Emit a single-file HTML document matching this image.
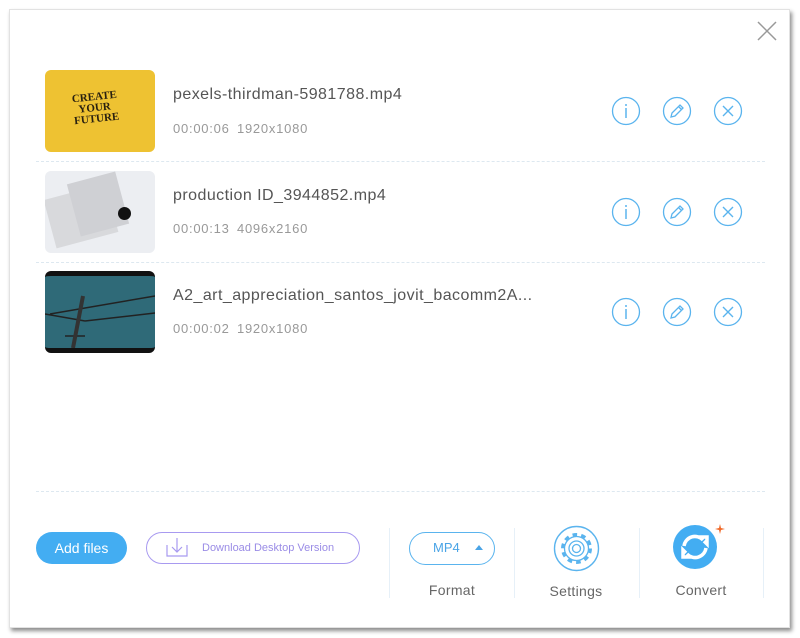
<!DOCTYPE html>
<html><head><meta charset="utf-8"><style>
*{margin:0;padding:0;box-sizing:border-box}
body{width:800px;height:638px;background:#fff;position:relative;overflow:hidden;font-family:"Liberation Sans",Verdana,sans-serif}
.panel{position:absolute;left:9px;top:9px;width:781px;height:619px;background:#fff;border:1px solid #e2e2e2;box-shadow:2px 3px 4px rgba(0,0,0,.45)}
.abs{position:absolute}
.thumb{position:absolute;left:45px;width:110px;height:82px;border-radius:6px;overflow:hidden}
.name{position:absolute;left:173px;font-size:16px;color:#555;letter-spacing:0.45px}
.meta{position:absolute;left:173px;font-size:13px;color:#999;word-spacing:3px;letter-spacing:0.75px}
.sep{position:absolute;left:36px;width:729px;border-top:1px dashed #dde8f0}
.ic{position:absolute;width:30px;height:30px}
.vl{position:absolute;top:528px;height:70px;border-left:1px solid #e6f0f8}
.lbl{position:absolute;font-size:14px;color:#666;text-align:center;letter-spacing:0.3px}
</style></head><body>
<div class="panel"></div>
<svg class="abs" style="left:756px;top:20px" width="22" height="22"><path d="M2 2L20 20M20 2L2 20" stroke="#999" stroke-width="1.5"/></svg>

<div class="thumb" style="top:70px;background:#eec232">
<div class="abs" style="left:28px;top:22px;font:bold 11px 'Liberation Serif',serif;color:#2a2110;line-height:11px;transform:rotate(-6deg)">CREATE<br>&nbsp;&nbsp;YOUR<br>FUTURE</div></div>
<div class="name" style="top:86px">pexels-thirdman-5981788.mp4</div>
<div class="meta" style="top:121px">00:00:06 1920x1080</div>
<div class="sep" style="top:161px"></div>

<div class="thumb" style="top:171px;background:#eceef2">
<div class="abs" style="left:4px;top:20px;width:64px;height:50px;background:#d8d9dc;transform:rotate(-15deg)"></div>
<div class="abs" style="left:28px;top:6px;width:50px;height:54px;background:#cfd0d4;transform:rotate(-15deg)"></div>
<div class="abs" style="left:73px;top:36px;width:13px;height:13px;border-radius:50%;background:#111"></div></div>
<div class="name" style="top:187px">production ID_3944852.mp4</div>
<div class="meta" style="top:221px">00:00:13 4096x2160</div>
<div class="sep" style="top:262px"></div>

<div class="thumb" style="top:271px;background:#2f6a78;border-top:5px solid #111;border-bottom:5px solid #111">
<svg class="abs" style="left:0;top:0" width="110" height="72"><path d="M5 38L110 20M0 38L40 45M40 45L110 37M40 60L20 60" stroke="#222" stroke-width="1.5" fill="none"/><path d="M38 20L28 72" stroke="#333" stroke-width="4"/></svg></div>
<div class="name" style="top:287px">A2_art_appreciation_santos_jovit_bacomm2A...</div>
<div class="meta" style="top:321px">00:00:02 1920x1080</div>
<div class="sep" style="top:491px"></div>

<svg width="0" height="0" style="position:absolute"><defs>
<g id="i"><circle cx="15" cy="15" r="13.5" fill="none" stroke="#5ab4ee" stroke-width="1.3"/><circle cx="15" cy="9" r="1" fill="#5ab4ee"/><path d="M15 12V22" stroke="#5ab4ee" stroke-width="1.5"/></g>
<g id="p"><circle cx="15" cy="15" r="13.5" fill="none" stroke="#5ab4ee" stroke-width="1.3"/><path d="M9 21L10 17L18 9L21 12L13 20Z M16.5 10.5L19.5 13.5" fill="none" stroke="#5ab4ee" stroke-width="1.3"/></g>
<g id="x"><circle cx="15" cy="15" r="13.5" fill="none" stroke="#5ab4ee" stroke-width="1.3"/><path d="M10 10L20 20M20 10L10 20" stroke="#5ab4ee" stroke-width="1.4"/></g>
</defs></svg>
<svg class="ic" style="left:611px;top:96px"><use href="#i"/></svg>
<svg class="ic" style="left:662px;top:96px"><use href="#p"/></svg>
<svg class="ic" style="left:713px;top:96px"><use href="#x"/></svg>
<svg class="ic" style="left:611px;top:197px"><use href="#i"/></svg>
<svg class="ic" style="left:662px;top:197px"><use href="#p"/></svg>
<svg class="ic" style="left:713px;top:197px"><use href="#x"/></svg>
<svg class="ic" style="left:611px;top:297px"><use href="#i"/></svg>
<svg class="ic" style="left:662px;top:297px"><use href="#p"/></svg>
<svg class="ic" style="left:713px;top:297px"><use href="#x"/></svg>

<div class="abs" style="left:36px;top:532px;width:91px;height:32px;border-radius:16px;background:#43adf2;color:#fff;font-size:14px;line-height:32px;text-align:center">Add files</div>
<div class="abs" style="left:146px;top:532px;width:214px;height:32px;border-radius:16px;border:1.5px solid #a89af0;color:#9a8ce6;font-size:11px;line-height:31px;padding-left:55px">Download Desktop Version</div>
<svg class="abs" style="left:165px;top:537px" width="24" height="22"><path d="M2 8V19H22V8M12 1V15M7 10L12 15L17 10" fill="none" stroke="#a89af0" stroke-width="1.2"/></svg>

<div class="vl" style="left:389px"></div><div class="vl" style="left:514px"></div><div class="vl" style="left:639px"></div><div class="vl" style="left:763px"></div>
<div class="abs" style="left:409px;top:532px;width:86px;height:33px;border-radius:17px;border:1.5px solid #5ab4ee;color:#4aa4e6;font-size:13px;line-height:30px;padding-left:23px">MP4</div>
<div class="abs" style="left:475px;top:545px;width:0;height:0;border-left:4px solid transparent;border-right:4px solid transparent;border-bottom:5px solid #4aa4e6"></div>
<div class="lbl" style="left:412px;top:582px;width:80px">Format</div>
<svg class="abs" style="left:553px;top:525px" width="47" height="47"><circle cx="23.5" cy="23.5" r="22" fill="none" stroke="#5ab4ee" stroke-width="1.4"/><circle cx="23.5" cy="23.5" r="13.5" fill="none" stroke="#5ab4ee" stroke-width="4" stroke-dasharray="4.5 4"/><circle cx="23.5" cy="23.5" r="12" fill="#fff" stroke="#5ab4ee" stroke-width="1.3"/><circle cx="23.5" cy="23.5" r="7.5" fill="none" stroke="#5ab4ee" stroke-width="1.3"/><circle cx="23.5" cy="23.5" r="4" fill="none" stroke="#5ab4ee" stroke-width="1.3"/></svg>
<div class="lbl" style="left:536px;top:583px;width:80px">Settings</div>
<svg class="abs" style="left:672px;top:524px" width="60" height="48"><circle cx="23" cy="23" r="22" fill="#43adf2"/><path d="M12 22A11 11 0 0 1 31 16L28 13L35 13L35 20L32 17M34 24A11 11 0 0 1 15 30L18 33L11 33L11 26L14 29" fill="none" stroke="#fff" stroke-width="3.5"/><path d="M48 0L49 4L53 5L49 6L48 10L47 6L43 5L47 4Z" fill="#f06a2a"/></svg>
<div class="lbl" style="left:661px;top:582px;width:80px">Convert</div>
</body></html>
